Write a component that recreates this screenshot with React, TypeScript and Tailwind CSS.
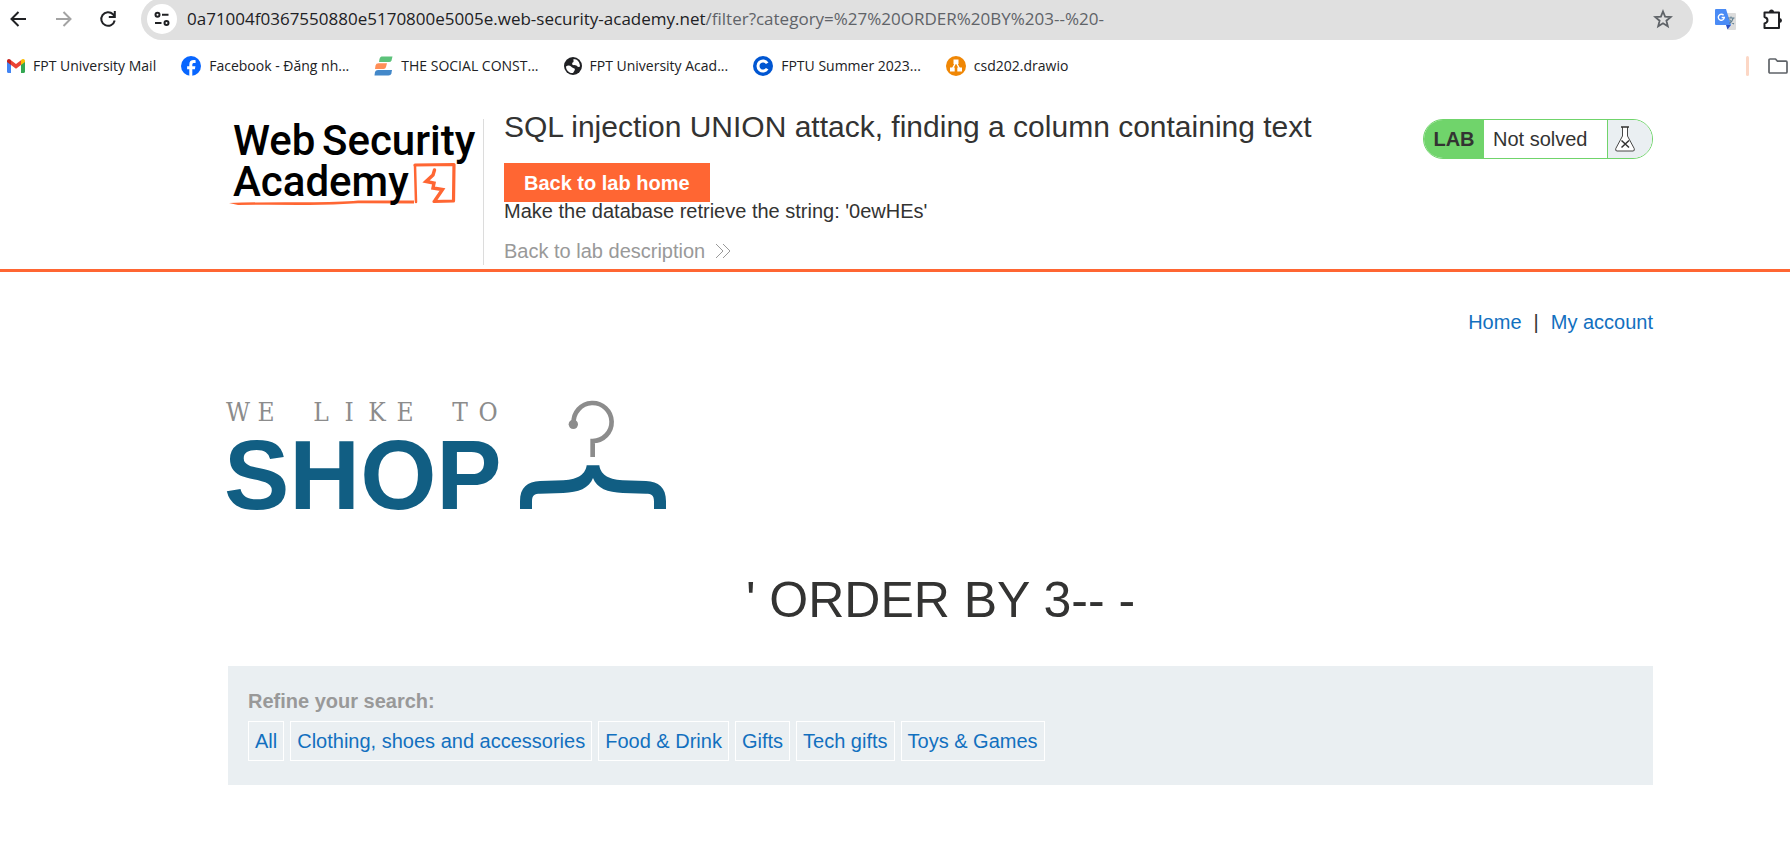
import React from "react";

const categories = [
  "All",
  "Clothing, shoes and accessories",
  "Food & Drink",
  "Gifts",
  "Tech gifts",
  "Toys & Games",
];

function GmailIcon() {
  return (
    <svg width="18" height="14" viewBox="0 0 18 14" aria-hidden="true">
      <path d="M0 2.2V12.8C0 13.5.5 14 1.2 14H4V5z" fill="#4285f4" />
      <path d="M14 5v9h2.8c.7 0 1.2-.5 1.2-1.2V2.2z" fill="#34a853" />
      <path d="M14 1.2V6l4-3V1.9C18 .2 16-.6 14.7.5z" fill="#fbbc04" />
      <path d="M4 6V1.2l5 3.8 5-3.8V6L9 9.8z" fill="#ea4335" />
      <path d="M0 1.9V3l4 3V1.2L3.3.5C2-.6 0 .2 0 1.9z" fill="#c5221f" />
    </svg>
  );
}

function FacebookIcon() {
  return (
    <svg width="20" height="20" viewBox="0 0 20 20" aria-hidden="true">
      <circle cx="10" cy="10" r="10" fill="#0866ff" />
      <path d="M8.3 20v-6.8H6.1v-3h2.2V8.7c0-3.2 1.5-4.6 4.5-4.6.6 0 1.4.1 1.8.2v2.7h-1.3c-1.5 0-2 .6-2 2v1.2h3.1l-.5 3h-2.6V20z" fill="#fff" />
    </svg>
  );
}

function SocialIcon() {
  return (
    <svg width="19" height="20" viewBox="0 0 19 20" aria-hidden="true">
      <path d="M5.5 3C6 1 7 .5 8.5.5H18.5L17.5 4.5Q17 6 15 6H5z" fill="#5cc27a" />
      <path d="M1.5 9.500Q2 7.200 4.500 7.200H13L12 11Q11.500 13 9.500 13H1z" fill="#ff8f57" />
      <path d="M1 16Q1.600 14 4 14H18L17.400 17.500Q17 19.500 14.500 19.500H.5z" fill="#4388c9" />
    </svg>
  );
}

function GlobeIcon() {
  return (
    <svg width="18" height="20" viewBox="0 0 18 20" aria-hidden="true">
      <circle cx="9" cy="10" r="9" fill="#202124" />
      <path d="M2 10.500C3.500 9 6 9.300 7 10.500S9.500 12 10.500 12.500 10.500 15 9 17C5 17.500 2 14 2 10.500z" fill="#fff" />
      <path d="M9.500 3C13.500 3 16 6.500 16 10.500c-1 .8-2.500.5-3-.5-.7-1-2.500-.5-4-1S8 6.500 9.500 6z" fill="#fff" />
    </svg>
  );
}

function CIcon() {
  return (
    <svg width="20" height="20" viewBox="0 0 20 20" aria-hidden="true">
      <circle cx="10" cy="10" r="10" fill="#0056d2" />
      <path d="M14.2 7.3A5 5 0 1 0 14.2 12.7" fill="none" stroke="#fff" strokeWidth="3" />
    </svg>
  );
}

function DrawioIcon() {
  return (
    <svg width="20" height="20" viewBox="0 0 20 20" aria-hidden="true">
      <circle cx="10" cy="10" r="10" fill="#f08705" />
      <path d="M10 6L6.300 13M10 6l3.700 7" stroke="#fff" strokeWidth="1.5" />
      <path d="M7.500 3.500h5v4.500h-5zM4 11.500h4.700v4H4zM11.300 11.500H16v4h-4.700z" fill="#fff" />
    </svg>
  );
}

const bookmarks = [
  { label: "FPT University Mail", icon: <GmailIcon /> },
  { label: "Facebook - Đăng nh...", icon: <FacebookIcon /> },
  { label: "THE SOCIAL CONST...", icon: <SocialIcon /> },
  { label: "FPT University Acad...", icon: <GlobeIcon /> },
  { label: "FPTU Summer 2023...", icon: <CIcon /> },
  { label: "csd202.drawio", icon: <DrawioIcon /> },
];

function BrowserBar() {
  return (
    <header className="overflow-hidden font-['Open_Sans','Noto_Sans',sans-serif] text-[#202124]">
      <div className="-mt-0.5 flex h-[42px] items-center">
        <div className="flex w-[141px] shrink-0 items-center gap-[25px] pl-2">
          <button type="button" aria-label="Back">
            <svg width="20" height="20" viewBox="0 0 20 20" fill="none" stroke="#202124" strokeWidth="2">
              <path d="M18 10H4M10.500 3L3.500 10l7 7" />
            </svg>
          </button>
          <button type="button" aria-label="Forward">
            <svg width="20" height="20" viewBox="0 0 20 20" fill="none" stroke="#a3a3a3" strokeWidth="2">
              <path d="M3 10h14M10.500 3l7 7-7 7" />
            </svg>
          </button>
          <button type="button" aria-label="Reload">
            <svg width="20" height="20" viewBox="0 0 20 20" fill="none" stroke="#202124" strokeWidth="2">
              <path d="M16.700 11.500A6.800 6.800 0 1 1 15 5.300L16.500 7" />
              <path d="M16.800 2v6h-6" />
            </svg>
          </button>
        </div>
        <div className="flex h-full min-w-0 flex-1 items-center rounded-full bg-[#e0e0e0] pl-1.5 pr-5">
          <button type="button" aria-label="Site information" className="flex size-[30px] shrink-0 items-center justify-center rounded-full bg-white">
            <svg width="16" height="16" viewBox="0 0 16 16" fill="none" stroke="#202124" strokeWidth="2">
              <circle cx="3.500" cy="3.800" r="2" />
              <path d="M8 3.800h6.500M1 12h6.500" />
              <circle cx="12.500" cy="12" r="2" />
            </svg>
          </button>
          <p className="ml-2.5 min-w-0 flex-1 truncate text-[17px] leading-6">
            0a71004f0367550880e5170800e5005e.web-security-academy.net
            <span className="text-[#5f6368]">/filter?category=%27%20ORDER%20BY%203--%20-</span>
          </p>
          <button type="button" aria-label="Bookmark this page">
            <svg width="20" height="20" viewBox="0 0 20 20" fill="none" stroke="#5f6368" strokeWidth="1.8">
              <path d="M10 2.500l2.100 5.200 5.600.4-4.300 3.600 1.400 5.500L10 14.200l-4.800 3 1.400-5.500L2.300 8.100l5.600-.4z" />
            </svg>
          </button>
        </div>
        <div className="flex w-[97px] shrink-0 items-center justify-between pl-[22px] pr-[7px]">
          <button type="button" aria-label="Translate">
            <svg width="21" height="21" viewBox="0 0 21 21">
              <path d="M8 4h12q1 0 1 1v15q0 1-1 1h-7z" fill="#dcdcdc" />
              <path d="M11 16h5l-3.500 4.500z" fill="#2a4fc4" />
              <path d="M1 0h10l5 16H1q-1 0-1-1V1q0-1 1-1z" fill="#4a8bf5" />
              <path d="M8.600 6.300A3 3 0 1 0 9.300 8.500H6.600" fill="none" stroke="#fff" strokeWidth="1.4" />
              <path d="M13 9h6.500M16 7.500V9M18.300 9q-1 3.500-4 5.500M14.500 10.500q1.500 3 4.500 4.500" fill="none" stroke="#5f7f92" strokeWidth="1.1" />
            </svg>
          </button>
          <button type="button" aria-label="Extensions">
            <svg width="21" height="21" viewBox="0 0 21 21">
              <path d="M2.500 3.500H17V19H2.500V14.500Q5.500 13.500 5.500 11.200T2.500 8z" fill="none" stroke="#202124" strokeWidth="2" strokeLinejoin="round" />
              <path d="M7 3a2.500 2.500 0 0 1 5 0zM17.500 9a2.500 2.500 0 0 1 0 5z" fill="#202124" />
            </svg>
          </button>
        </div>
      </div>
      <nav aria-label="Bookmarks" className="flex h-[52px] items-center justify-between pl-[7px] pr-0.5">
        <ul className="flex items-center gap-[25px]">
          {bookmarks.map((b) => (
            <li key={b.label}>
              <a href="#" className="flex items-center gap-2 text-[14px] leading-5">
                {b.icon}
                {b.label}
              </a>
            </li>
          ))}
        </ul>
        <div className="flex items-center gap-[19px]">
          <span className="h-5 w-[3px] rounded-sm bg-[#fcd7c5]" />
          <button type="button" aria-label="All bookmarks">
            <svg width="20" height="16" viewBox="0 0 20 16" fill="none" stroke="#5f6368" strokeWidth="1.7" strokeLinejoin="round">
              <path d="M1 2Q1 1 2 1H7.500L9.500 3.200H18Q19 3.200 19 4.200V14Q19 15 18 15H2Q1 15 1 14z" />
            </svg>
          </button>
        </div>
      </nav>
    </header>
  );
}

function AcademyLogo() {
  return (
    <svg className="overflow-visible" width="250" height="100" viewBox="0 0 250 100" role="img" aria-label="Web Security Academy">
      <g fill="#ff6633">
        <path d="M1 84Q30 83 70 83.200T130 81.500L186 81.500 186 84.500 130 84.300Q100 86.500 70 86T10 86z" />
      </g>
      <g fill="none" stroke="#ff6633" strokeLinejoin="round" strokeLinecap="round">
        <path d="M188 83L187 46.500" strokeWidth="2.5" />
        <path d="M187 46L226 45.500 225.500 82 206 82.500" strokeWidth="3.2" />
        <path d="M206.500 51l-1.500 5-7 6.500 8 1.500-1 5 9.500 1.500-7.500 11" strokeWidth="3.4" strokeLinejoin="miter" />
      </g>
      <g className="fill-black font-['Roboto',sans-serif] text-[42px] font-medium">
        <text x="5" y="36">Web</text>
        <text x="94" y="36">Security</text>
        <text x="5" y="77">Academy</text>
      </g>
    </svg>
  );
}

function ShopLogo() {
  return (
    <svg className="overflow-visible" width="442" height="116" viewBox="0 0 442 116" role="img" aria-label="We like to shop">
      <text
        x="10 38 0 93 121 149 177 0 232 260"
        y="23"
        textAnchor="middle"
        className="fill-[#8c8c8c] font-['DejaVu_Serif_Condensed','DejaVu_Serif',serif] text-[26px]"
      >
        WE LIKE TO
      </text>
      <text x="-4" y="111" className="fill-[#115e83] font-['Liberation_Sans',sans-serif] text-[98px] font-bold">
        SHOP
      </text>
      <g transform="translate(-8 -8) scale(.33333)">
        <path d="M1061 100A57 57 0 1 1 1118 153V201" fill="none" stroke="#8c8c8c" strokeWidth="14" />
        <circle cx="1060" cy="103" r="14" fill="#8c8c8c" />
        <path
          d="M900 357V334C900 292 922 275 960 273L1030 271C1078 269 1097 250 1100 226H1138C1141 250 1160 269 1208 271L1278 273C1316 275 1338 292 1338 334V357H1302V334C1302 315 1294 311 1278 311L1208 309C1163 307 1130 295 1119 264C1108 295 1075 307 1030 309L960 311C944 311 936 315 936 334V357Z"
          fill="#115e83"
        />
      </g>
    </svg>
  );
}

function LabHeader() {
  return (
    <section className="border-b-[3px] border-[#ff6633] pl-[228px] pr-[137px]">
      <div className="flex items-start pb-1 pt-[27px]">
        <div className="h-[146px] w-64 shrink-0 border-r border-[#dcdcdc]">
          <AcademyLogo />
        </div>
        <div className="-mt-3 min-w-0 flex-1 pl-5">
          <h2 className="text-[30px] leading-10">
            SQL injection UNION attack, finding a column containing text
          </h2>
          <a href="#" className="mt-4 flex h-[39px] w-fit items-center bg-[#ff6633] px-5 text-[20px] font-bold text-white">
            Back to lab home
          </a>
          <p className="text-[20px] leading-[18px]">Make the database retrieve the string: '0ewHEs'</p>
          <a href="#" className="mt-[19px] flex w-fit items-center gap-2.5 text-[20px] leading-6 text-[#999999]">
            Back to lab description
            <svg width="16" height="16" viewBox="0 0 16 16" fill="none" stroke="#999999" aria-hidden="true">
              <path d="M1 1l7 7-7 7M8 1l7 7-7 7" />
            </svg>
          </a>
        </div>
        <div className="flex h-10 w-[230px] shrink-0 items-stretch overflow-hidden rounded-full border border-[#70d46b] text-[20px]">
          <span className="flex w-[60px] items-center justify-center bg-[#70d46b] font-bold">LAB</span>
          <span className="flex flex-1 items-center pl-[9px]">Not solved</span>
          <span className="flex w-[45px] items-center border-l border-[#70d46b] bg-[#eaeff2] pl-[7px]">
            <svg width="20" height="26" viewBox="0 0 20 26" fill="none" stroke="#333332" aria-hidden="true">
              <path d="M7.500 1v9L.8 22.500Q0 25 2 25H18Q20 25 19.200 22.500L12.500 10V1" fill="#fff" strokeWidth=".9" />
              <path d="M6 1h8" strokeWidth="1.5" />
              <path d="M6.500 14.500l7.500 7M14 14.500l-7.500 7" strokeWidth="1.5" />
            </svg>
          </span>
        </div>
      </div>
    </section>
  );
}

export default function App() {
  return (
    <div className="bg-white font-['Liberation_Sans',Arial,sans-serif] text-[#333332]">
      <BrowserBar />
      <LabHeader />
      <main className="pb-16 pl-[228px] pr-[137px]">
        <nav aria-label="Account" className="flex justify-end gap-3 pt-[38px] text-[20px] leading-6">
          <a href="#" className="text-[#1270bf]">Home</a>
          <span>|</span>
          <a href="#" className="text-[#1270bf]">My account</a>
        </nav>
        <div className="pt-16">
          <ShopLogo />
        </div>
        <h1 className="mt-14 text-center text-[50px] leading-[60px]">' ORDER BY 3-- -</h1>
        <section className="mt-9 bg-[#eaeff2] px-5 pb-6 pt-[23px] text-[20px] leading-6">
          <h3 className="font-bold text-[#999999]">Refine your search:</h3>
          <div className="mt-2 flex flex-wrap gap-1.5">
            {categories.map((c) => (
              <a key={c} href="#" className="border border-white px-1.5 py-[7px] text-[#1270bf]">
                {c}
              </a>
            ))}
          </div>
        </section>
      </main>
    </div>
  );
}
